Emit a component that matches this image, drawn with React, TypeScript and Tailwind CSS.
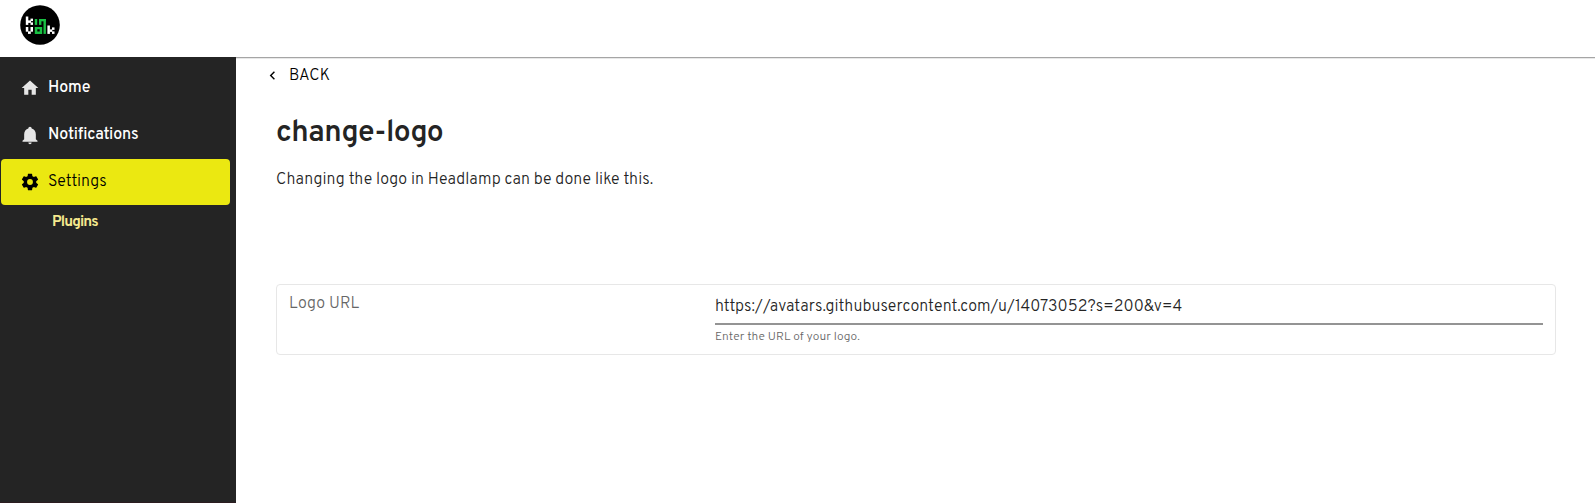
import type { ReactNode } from "react";

const ICONS = {
  home: "M10 20v-6h4v6h5v-8h3L12 3L2 12h3v8z",
  bell: "M21 19v1H3v-1l2-2v-6c0-3.1 2.03-5.83 5-6.71V4a2 2 0 0 1 2-2a2 2 0 0 1 2 2v.29c2.97.88 5 3.61 5 6.71v6zm-7 2a2 2 0 0 1-2 2a2 2 0 0 1-2-2",
  cog: "M12 15.5A3.5 3.5 0 0 1 8.5 12A3.5 3.5 0 0 1 12 8.5a3.5 3.5 0 0 1 3.5 3.5a3.5 3.5 0 0 1-3.5 3.5m7.43-2.53c.04-.32.07-.64.07-.97s-.03-.66-.07-1l2.11-1.63c.19-.15.24-.42.12-.64l-2-3.46c-.12-.22-.39-.31-.61-.22l-2.49 1c-.52-.39-1.06-.73-1.69-.98l-.37-2.65A.506.506 0 0 0 14 2h-4c-.25 0-.46.18-.5.42l-.37 2.65c-.63.25-1.17.59-1.69.98l-2.49-1c-.22-.09-.49 0-.61.22l-2 3.46c-.13.22-.07.49.12.64L4.57 11c-.04.34-.07.67-.07 1s.03.65.07.97l-2.11 1.66c-.19.15-.25.42-.12.64l2 3.46c.12.22.39.3.61.22l2.49-1.01c.52.4 1.06.74 1.69.99l.37 2.65c.04.24.25.42.5.42h4c.25 0 .46-.18.5-.42l.37-2.65c.63-.26 1.17-.59 1.69-.99l2.49 1.01c.22.08.49 0 .61-.22l2-3.46c.12-.22.07-.49-.12-.64z",
  chevronLeft: "M15.41 16.58L10.83 12l4.58-4.59L14 6l-6 6l6 6z",
};

function Icon({ path, className }: { path: string; className: string }) {
  return (
    <svg viewBox="0 0 24 24" className={className} fill="currentColor" aria-hidden="true">
      <path d={path} />
    </svg>
  );
}

function Logo() {
  return (
    <svg viewBox="0 0 40 40" className="size-10" aria-hidden="true">
      <circle cx="20" cy="20" r="19.8" fill="#000" />
      <g fill="#fff">
        <rect x="5.8" y="11.5" width="2.5" height="8.4" />
        <rect x="8" y="15.4" width="3" height="2.5" />
        <rect x="10.5" y="13.6" width="2.5" height="2.5" />
        <rect x="10.5" y="17.4" width="2.5" height="2.5" />
        <rect x="5.8" y="22" width="2.5" height="4.7" />
        <rect x="10.5" y="22" width="2.5" height="4.7" />
        <rect x="8" y="26.3" width="2.8" height="2.6" />
        <rect x="27.4" y="20.5" width="2.5" height="8.4" />
        <rect x="29.6" y="24.4" width="2.7" height="2.5" />
        <rect x="32" y="22.4" width="2.5" height="2.5" />
        <rect x="32" y="26.4" width="2.5" height="2.5" />
      </g>
      <g fill="#19c043">
        <rect x="14.8" y="14" width="2.4" height="5.9" />
        <rect x="19" y="14" width="2.4" height="5.9" />
        <rect x="19" y="14" width="6.9" height="2.3" />
        <rect x="23.5" y="14" width="2.4" height="14.9" />
        <path d="M14.8 22h7.4v6.9h-7.4zM17.3 24.3v2.2h2.4v-2.2z" fillRule="evenodd" />
      </g>
    </svg>
  );
}

function NavItem({ icon, selected, children }: { icon: string; selected?: boolean; children: ReactNode }) {
  return (
    <a
      className={
        selected
          ? "ml-px mr-1.5 flex h-[46px] items-center rounded bg-[#ebe811] pl-[19px] text-black"
          : "ml-px mr-1.5 flex h-[47px] items-center pl-[19px] text-white"
      }
    >
      <Icon path={icon} className={selected ? "size-5" : "mb-px size-5 text-[#e6e6e6]"} />
      {children}
    </a>
  );
}

export default function App() {
  return (
    <div className="flex h-[503px] w-[1595px] flex-col overflow-hidden bg-white font-['Overpass','Roboto',sans-serif] text-[#242424]">
      <header className="h-[57px] shrink-0 pl-5 pt-[5px]">
        <Logo />
      </header>
      <div className="flex min-h-0 flex-1">
        <nav className="w-[236px] shrink-0 border-b border-[#2b1c20] bg-[#242424] pt-2">
          <NavItem icon={ICONS.home}>
            <span className="ml-2 pb-px text-base font-medium tracking-[-0.1px]">Home</span>
          </NavItem>
          <NavItem icon={ICONS.bell}>
            <span className="ml-2 pb-px text-base font-medium tracking-[-0.12px]">Notifications</span>
          </NavItem>
          <NavItem icon={ICONS.cog} selected>
            <span className="ml-2 pb-px text-base font-light tracking-[0.04px]">Settings</span>
          </NavItem>
          <a className="block pl-[52px] pt-2 text-[15px] leading-5 font-bold tracking-[-0.85px] text-[#f5e98e]">Plugins</a>
        </nav>
        <main className="min-w-0 flex-1 border-t border-[#a5a5a5] shadow-[inset_0_1px_0_#e8e8e8]">
          <button className="flex h-[34px] items-center pl-7 text-black">
            <Icon path={ICONS.chevronLeft} className="size-[17px]" />
            <span className="ml-2 pt-0.5 text-base font-light tracking-[0.2px]">BACK</span>
          </button>
          <div className="pl-10 pr-[39px]">
            <h1 className="mt-[21px] text-[30px] leading-[42px] font-semibold tracking-[-0.55px]">change-logo</h1>
            <p className="mt-[13px] text-base leading-6 font-light tracking-[0.08px]">
              Changing the logo in Headlamp can be done like this.
            </p>
            <section className="mt-[92px] flex h-[71px] rounded border border-[#e7e7e7] px-3">
              <div className="w-[426px] pt-[7px] text-base leading-6 font-light tracking-[0.15px] text-[#666]">
                Logo URL
              </div>
              <div className="flex-1">
                <div className="h-10 border-b-2 border-[#949494] pt-[10px] text-base leading-6 font-light tracking-[0.09px]">
                  https://avatars.githubusercontent.com/u/14073052?s=200&amp;v=4
                </div>
                <p className="mt-0.5 text-xs leading-5 font-light tracking-[0.07px] text-[#666]">
                  Enter the URL of your logo.
                </p>
              </div>
            </section>
          </div>
        </main>
      </div>
    </div>
  );
}
